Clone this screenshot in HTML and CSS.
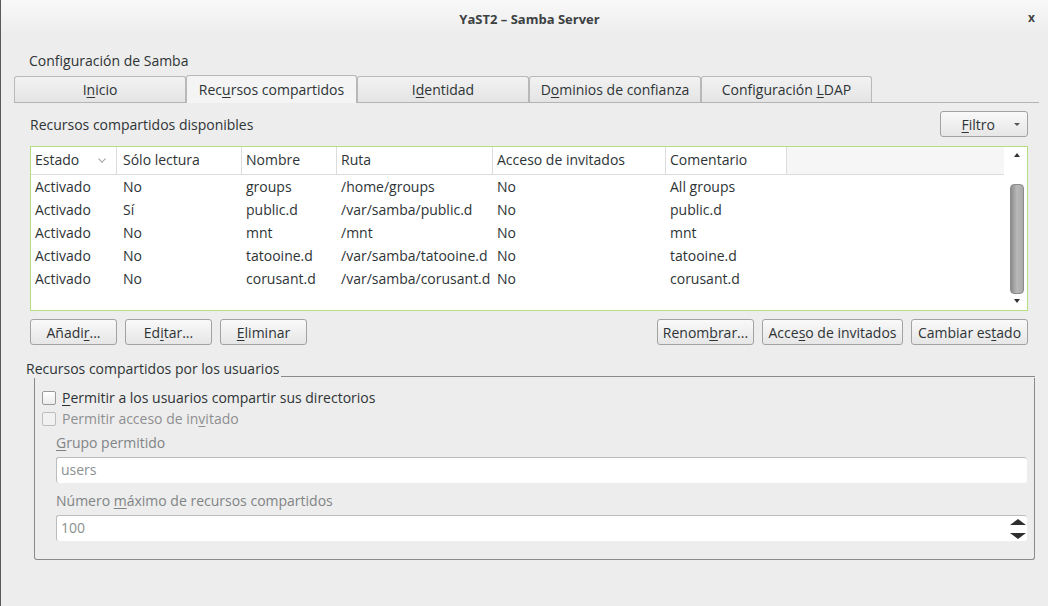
FILE: index.html
```html
<!DOCTYPE html>
<html>
<head>
<meta charset="utf-8">
<link rel="stylesheet" href="styles.css">
</head>
<body>
<div class="window">
  <div class="titlebar">
    <span class="title">YaST2 – Samba Server</span>
    <span class="close">x</span>
  </div>
  <div class="main">
    <div class="heading">Configuración de Samba</div>
    <div class="tabs">
      <div class="tab">I<u>n</u>icio</div>
      <div class="tab active narrow">Rec<u>u</u>rsos compartidos</div>
      <div class="tab">I<u>d</u>entidad</div>
      <div class="tab">D<u>o</u>minios de confianza</div>
      <div class="tab narrow">Configuración <u>L</u>DAP</div>
      <div class="tabline"></div>
    </div>
    <div class="toolrow">
      <span class="sublabel">Recursos compartidos disponibles</span>
      <button class="btn filter"><span><u>F</u>iltro</span><span class="caret"></span></button>
    </div>
    <div class="table">
      <div class="tbody">
        <div class="row head">
          <div class="c c1">Estado<span class="sort"></span></div>
          <div class="c c2">Sólo lectura</div>
          <div class="c c3">Nombre</div>
          <div class="c c4">Ruta</div>
          <div class="c c5">Acceso de invitados</div>
          <div class="c c6">Comentario</div>
          <div class="c cfill"></div>
        </div>
        <div class="row"><div class="c c1">Activado</div><div class="c c2">No</div><div class="c c3">groups</div><div class="c c4">/home/groups</div><div class="c c5">No</div><div class="c c6">All groups</div></div>
        <div class="row"><div class="c c1">Activado</div><div class="c c2">Sí</div><div class="c c3">public.d</div><div class="c c4">/var/samba/public.d</div><div class="c c5">No</div><div class="c c6">public.d</div></div>
        <div class="row"><div class="c c1">Activado</div><div class="c c2">No</div><div class="c c3">mnt</div><div class="c c4">/mnt</div><div class="c c5">No</div><div class="c c6">mnt</div></div>
        <div class="row"><div class="c c1">Activado</div><div class="c c2">No</div><div class="c c3">tatooine.d</div><div class="c c4">/var/samba/tatooine.d</div><div class="c c5">No</div><div class="c c6">tatooine.d</div></div>
        <div class="row"><div class="c c1">Activado</div><div class="c c2">No</div><div class="c c3">corusant.d</div><div class="c c4">/var/samba/corusant.d</div><div class="c c5">No</div><div class="c c6">corusant.d</div></div>
      </div>
      <div class="vscroll">
        <span class="arr up"></span>
        <span class="thumb"></span>
        <span class="arr down"></span>
      </div>
    </div>
    <div class="btnrow">
      <button class="btn w87">Añadi<u>r</u>...</button>
      <button class="btn w87 ml8">Ed<u>i</u>tar...</button>
      <button class="btn w87 ml8"><u>E</u>liminar</button>
      <span class="spacer"></span>
      <button class="btn b-ren">Renom<u>b</u>rar...</button>
      <button class="btn b-acc">Acce<u>s</u>o de invitados</button>
      <button class="btn b-cam">Cambiar es<u>t</u>ado</button>
    </div>
    <div class="group">
      <div class="grouphead">
        <span class="grouplabel">Recursos compartidos por los usuarios</span>
        <span class="groupline"></span>
      </div>
      <div class="frame">
        <label class="check"><span class="box"></span><span><u>P</u>ermitir a los usuarios compartir sus directorios</span></label>
        <label class="check disabled"><span class="box"></span><span>Permitir acceso de in<u>v</u>itado</span></label>
        <div class="field">
          <div class="flabel"><u>G</u>rupo permitido</div>
          <div class="input">users</div>
        </div>
        <div class="field">
          <div class="flabel">Número <u>m</u>áximo de recursos compartidos</div>
          <div class="input spin">100<span class="spinarrows"><span class="sup"></span><span class="sdown"></span></span></div>
        </div>
      </div>
    </div>
  </div>
</div>
</body>
</html>
```
FILE: styles.css
```css
* { box-sizing: border-box; }
html, body { margin: 0; padding: 0; }
body {
  width: 1048px; height: 606px; overflow: hidden;
  background: #ededed;
  font-family: "Open Sans", "DejaVu Sans", sans-serif;
  font-size: 14px;
  color: #2e3436;
}
u { text-decoration: underline; text-underline-offset: 2px; }
.window {
  width: 1048px; height: 606px;
  border-left: 1px solid #5a5a5a;
  display: flex; flex-direction: column;
}
.titlebar {
  height: 37px; flex: none;
  background: linear-gradient(#f8f8f8, #ececec);
  display: flex; align-items: center; justify-content: center;
  position: relative;
  font-weight: bold; font-size: 13px; color: #3c4143;
}
.title { margin-left: 10px; }
.close {
  position: absolute; right: 13px; top: 9px;
  font-size: 12px; color: #444;
}
.main { display: flex; flex-direction: column; }
.heading { margin: 15px 0 0 28px; height: 18px; line-height: 18px; }
.tabs {
  margin: 6px 0 0 13px; display: flex; align-items: flex-end; height: 27px;
  width: 1025px; border-bottom: 1px solid #b4b4b4;
}
.tab {
  width: 172px; height: 26px; flex: none;
  border: 1px solid #b8b8b8; border-bottom: none;
  border-radius: 3px 3px 0 0;
  background: linear-gradient(#f2f2f2, #e4e4e4);
  text-align: center; line-height: 25px;
}
.tab.narrow { width: 171px; }
.tab.active {
  background: #f4f4f4; line-height: 27px;
  position: relative; z-index: 1; margin-bottom: -1px; height: 28px;
}
.tabline { flex: 1; }
.toolrow {
  margin: 8px 0 0 29px; width: 998px; height: 26px;
  display: flex; align-items: center; justify-content: space-between;
}
.btn {
  font: inherit; color: #2e3436;
  border: 1px solid #a2a2a2; border-radius: 3px;
  background: linear-gradient(#f9f9f9, #e6e6e6);
  height: 26px; padding: 0; margin: 0;
  display: inline-flex; align-items: center; justify-content: center;
  flex: none;
}
.filter { width: 88px; padding: 0 7px 0 0; justify-content: flex-end; gap: 19px; height: 26px; }
.caret {
  width: 0; height: 0; border-left: 3px solid transparent; border-right: 3px solid transparent;
  border-top: 3px solid #555;
}
.table {
  margin: 9px 0 0 29px; width: 998px; height: 165px;
  border: 1px solid #b3e07f; background: #fff;
  display: flex;
}
.tbody { flex: 1; display: flex; flex-direction: column; }
.row { display: flex; height: 23px; line-height: 23px; }
.row.head { height: 28px; line-height: 26px; border-bottom: 1px solid #dcdcdc; margin-right: 5px; }
.row.head .c { border-right: 1px solid #dcdcdc; }
.row.head .cfill { border-right: none; flex: 1; background: #f6f6f6; }
.c { padding-left: 4px; white-space: nowrap; overflow: hidden; flex: none; }
.c1 { width: 86px; position: relative; }
.c2 { width: 125px; padding-left: 6px; }
.c3 { width: 95px; }
.c4 { width: 156px; }
.c5 { width: 173px; }
.c6 { width: 121px; }
.sort {
  position: absolute; left: 68px; top: 9px; width: 6px; height: 6px;
  border-right: 1.5px solid #999; border-bottom: 1.5px solid #999;
  transform: rotate(45deg) scale(0.9);
}
.vscroll { width: 18px; flex: none; position: relative; }
.arr { position: absolute; left: 5px; width: 0; height: 0; border-left: 3.5px solid transparent; border-right: 3.5px solid transparent; }
.arr.up { top: 6px; border-bottom: 4px solid #333; }
.arr.down { bottom: 7px; border-top: 4px solid #333; }
.thumb {
  position: absolute; left: 1px; top: 37px; width: 14px; height: 110px;
  border-radius: 4px; border: 1px solid #8c8c8c;
  background: linear-gradient(90deg, #8d8d8d, #b8b8b8 50%, #a9a9a9);
}
.btnrow { margin: 8px 0 0 29px; width: 998px; display: flex; }
.w87 { width: 87px; }
.ml8 { margin-left: 8px; }
.spacer { flex: 1; }
.b-ren { width: 97px; }
.b-acc { width: 141px; margin-left: 8px; }
.b-cam { width: 117px; margin-left: 8px; }
.group { margin: 15px 0 0 25px; width: 1009px; }
.grouphead { display: flex; align-items: flex-end; height: 18px; line-height: 18px; }
.grouplabel { padding-right: 2px; }
.groupline { flex: 1; height: 1px; background: #8a8a8a; margin-bottom: 1px; }
.frame {
  margin-left: 8px; height: 182px;
  border: 1px solid #8a8a8a; border-top: none; border-radius: 0 0 3px 3px;
  padding: 11px 6px 0 7px;
  display: flex; flex-direction: column;
}
.check { display: flex; align-items: center; height: 17px; gap: 6px; margin-bottom: 4px; }
.check.disabled { color: #8d8f90; }
.box {
  width: 14px; height: 14px; border: 1px solid #9a9a9a; border-radius: 2px;
  background: linear-gradient(#fff, #ececec);
}
.check.disabled .box { border-color: #bdbdbd; background: #f1f1f1; }
.field { margin-left: 14px; margin-top: 3px; }
.flabel { color: #808485; height: 18px; line-height: 18px; margin-bottom: 5px; }
.input {
  height: 26px; width: 971px; background: #fff;
  border-top: 1px solid #bcbcbc; border-left: 1px solid #bcbcbc; border-radius: 3px;
  color: #8b8f90; padding-left: 4px; line-height: 24px;
  position: relative;
}
.field + .field { margin-top: 9px; }
.spinarrows { position: absolute; right: 1px; top: 2px; width: 16px; height: 22px; }
.sup, .sdown { position: absolute; left: 0; width: 0; height: 0; border-left: 8px solid transparent; border-right: 8px solid transparent; }
.sup { top: 1px; border-bottom: 6px solid #2e2e2e; }
.sdown { bottom: 1px; border-top: 6px solid #2e2e2e; }
```
